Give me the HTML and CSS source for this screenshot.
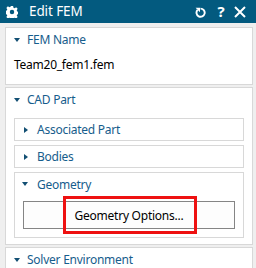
FILE: index.html
```html
<!DOCTYPE html>
<html>
<head>
<meta charset="utf-8">
<link rel="stylesheet" href="styles.css">
</head>
<body>
<div class="titlebar">
  <svg class="gear" width="12" height="12" viewBox="0 0 14 14">
    <path fill="#fff" fill-rule="evenodd" d="M5.7 0h2.6l.4 2 1.4.6 1.7-1.1 1.8 1.8-1.1 1.7.6 1.4 2 .4v2.6l-2 .4-.6 1.4 1.1 1.7-1.8 1.8-1.7-1.1-1.4.6-.4 2H5.7l-.4-2-1.4-.6-1.7 1.1-1.8-1.8 1.1-1.7-.6-1.4-2-.4V5.7l2-.4.6-1.4-1.1-1.7 1.8-1.8 1.7 1.1 1.4-.6zM7 4.4a2.6 2.6 0 1 0 0 5.2 2.6 2.6 0 1 0 0-5.2z"/>
  </svg>
  <span class="title">Edit FEM</span>
  <span class="spacer"></span>
  <svg class="refresh" width="11" height="11" viewBox="0 0 11 11">
    <path d="M2.6 2.9A4.1 4.1 0 1 0 5.5 1.6" fill="none" stroke="#fff" stroke-width="1.9"/>
    <path d="M0.6 0.8h4.4v4.4z" fill="#fff"/>
  </svg>
  <span class="q">?</span>
  <svg class="x" width="12" height="12" viewBox="0 0 12 12">
    <path d="M1 1l10 10M11 1L1 11" stroke="#fff" stroke-width="2"/>
  </svg>
</div>
<div class="content">
  <div class="panel p1">
    <div class="head"><span class="tri down"></span>FEM Name</div>
    <div class="value">Team20_fem1.fem</div>
  </div>
  <div class="panel p2">
    <div class="head"><span class="tri down"></span>CAD Part</div>
    <div class="subs">
      <div class="sub"><div class="head sh"><span class="tri right"></span>Associated Part</div></div>
      <div class="sub"><div class="head sh"><span class="tri right"></span>Bodies</div></div>
      <div class="sub geo">
        <div class="head sh"><span class="tri down"></span>Geometry</div>
        <div class="btnwrap">
          <div class="btn">Geometry Options...</div>
          <div class="highlight"></div>
        </div>
      </div>
    </div>
  </div>
  <div class="panel p3">
    <div class="head"><span class="tri down"></span>Solver Environment</div>
  </div>
</div>
</body>
</html>
```
FILE: styles.css
```css
* { box-sizing: border-box; }
html, body { margin: 0; padding: 0; }
body {
  width: 256px;
  height: 268px;
  overflow: hidden;
  background: #efefef;
  font-family: "Noto Sans", "Open Sans", sans-serif;
  font-size: 12px;
  letter-spacing: -0.25px;
}
.titlebar {
  height: 23px;
  background: #035a7f;
  display: flex;
  align-items: center;
  padding-left: 6px;
  color: #fff;
}
.gear { flex: none; }
.title {
  margin-left: 11px;
  font-size: 13.5px;
  letter-spacing: -0.1px;
  line-height: 23px;
}
.spacer { flex: 1; }
.refresh { flex: none; margin-right: 11px; margin-top: 1px; }
.q {
  flex: none;
  width: 8px;
  text-align: center;
  font-weight: bold;
  font-size: 15px;
  letter-spacing: 0;
  line-height: 23px;
  margin-right: 9px;
}
.x { flex: none; margin-right: 10px; margin-top: 1px; }
.content {
  padding: 4px 3px 0 5px;
  display: flex;
  flex-direction: column;
  gap: 2px;
}
.panel {
  background: #fff;
  border: 1px solid #d8d8d8;
  flex: none;
}
.p1 { height: 58px; }
.p2 { height: 158px; }
.p3 { height: 30px; }
.head {
  display: flex;
  align-items: center;
  height: 23px;
  padding-left: 8px;
  color: #165d8c;
}
.tri {
  display: inline-block;
  width: 0;
  height: 0;
  flex: none;
}
.tri.down {
  border-left: 3px solid transparent;
  border-right: 3px solid transparent;
  border-top: 4px solid #124f73;
  margin-right: 7px;
}
.tri.right {
  border-top: 3px solid transparent;
  border-bottom: 3px solid transparent;
  border-left: 4px solid #124f73;
  margin-right: 9px;
}
.value {
  padding-left: 8px;
  padding-top: 5px;
  color: #000;
}
.subs {
  margin: 7px 8px 0 8px;
  display: flex;
  flex-direction: column;
  gap: 4px;
}
.sub {
  border: 1px solid #d8d8d8;
  height: 23px;
}
.sub .sh { height: 21px; padding-left: 9px; }
.sub.geo { height: 66px; }
.sub.geo .sh { height: 22px; padding-left: 7px; }
.sub.geo .tri.down { margin-right: 9px; }
.btnwrap {
  position: relative;
  margin: 6px 8px 0 8px;
}
.btn {
  height: 28px;
  border: 1px solid #858585;
  background: #fdfdfd;
  display: flex;
  align-items: center;
  justify-content: center;
  color: #000;
}
.highlight {
  position: absolute;
  left: 40px;
  top: -5px;
  width: 134px;
  height: 38px;
  border: 3px solid #ee1111;
}
```
